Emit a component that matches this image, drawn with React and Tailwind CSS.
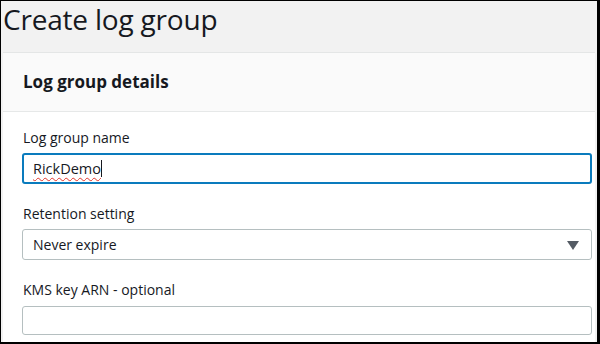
export default function App() {
  return (
    <div className="w-[600px] h-[344px] overflow-hidden border-l border-t border-r-[3px] border-b-[2px] border-black bg-[#f2f2f2] font-['Open_Sans',sans-serif] text-[#16191f] flex flex-col">
      {/* Page title */}
      <div className="h-[51px] shrink-0 pl-[2px] pt-[2px]">
        <h1 className="text-[28px] leading-[32px] font-normal tracking-[-0.2px]">Create log group</h1>
      </div>

      {/* Panel */}
      <div className="flex-1 mx-[2px] border-t border-[#e4e6e6] bg-white flex flex-col">
        <div className="h-[59px] shrink-0 bg-[#fafafa] border-b border-[#e6e8e8] pl-[20px] flex items-center">
          <h2 className="text-[17px] font-bold leading-none mt-[-1px]">Log group details</h2>
        </div>

        <div className="pl-[19px] pr-[3px] pt-[16px] flex flex-col">
          <label className="pl-[1px] text-[14px] leading-[20px]">Log group name</label>
          <div className="mt-[5px] h-[31px] rounded-[3px] border-2 border-[#0a7bbd] flex items-center pl-[9px]">
            <span className="text-[14.5px] leading-[20px] underline decoration-wavy decoration-[#e0352b] decoration-1 underline-offset-[3px]">RickDemo</span>
            <span className="w-px h-[17px] bg-[#16191f]" />
          </div>

          <label className="mt-[20px] pl-[1px] text-[14px] leading-[20px]">Retention setting</label>
          <div className="mt-[5px] h-[31px] rounded-[3px] border border-[#b5bfc0] flex items-center justify-between pl-[10px] pr-[12px]">
            <span className="text-[14px] leading-[20px]">Never expire</span>
            <svg width="12" height="9" viewBox="0 0 12 9" className="mt-[1px]">
              <path d="M0 0 L12 0 L6 9 Z" fill="#545b64" />
            </svg>
          </div>

          <label className="mt-[20px] pl-[1px] text-[14px] leading-[20px]">KMS key ARN - optional</label>
          <div className="mt-[6px] h-[29px] rounded-[3px] border border-[#b5bfc0]" />
        </div>
      </div>
    </div>
  );
}
